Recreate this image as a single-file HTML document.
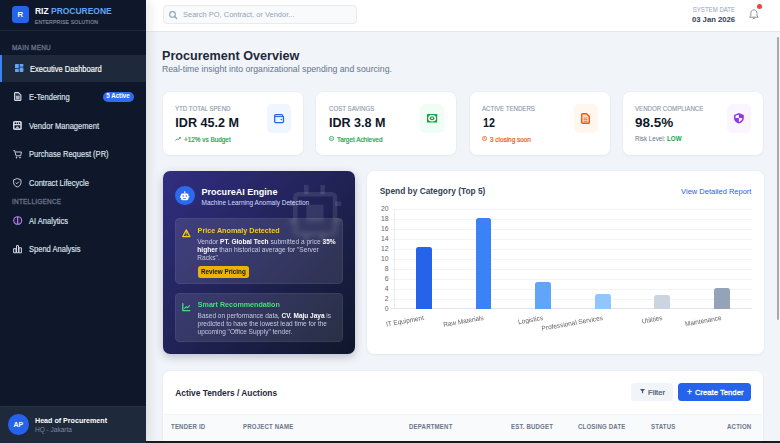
<!DOCTYPE html>
<html><head><meta charset="utf-8">
<style>
*{margin:0;padding:0;box-sizing:border-box}
html,body{width:780px;height:443px;overflow:hidden;background:#f1f5f9;font-family:"Liberation Sans",sans-serif}
.a{position:absolute}
.t{position:absolute;white-space:nowrap;line-height:1}
.b{font-weight:700}
svg{position:absolute;overflow:visible}
#side{z-index:10;left:0;top:0;width:146px;height:443px;background:#0f172a;box-shadow:2px 0 12px rgba(15,23,42,.12)}
#hdr{left:146px;top:0;width:634px;height:31.5px;background:#fff;border-bottom:1px solid #e5e9ef}
.card{position:absolute;background:#fff;border-radius:7px;box-shadow:0 0 0 .5px rgba(226,232,240,.6),0 1px 3px rgba(15,23,42,.05)}
.nav{color:#dfe5ee;font-size:8.4px;-webkit-text-stroke:.15px currentColor;transform:scaleX(.9);transform-origin:0 0}
.sec{color:#64748b;font-size:6.5px;font-weight:400;-webkit-text-stroke:.3px currentColor;letter-spacing:.2px}
.klab{color:#8794a8;font-size:6.8px;-webkit-text-stroke:.1px currentColor;transform:scaleX(.9);transform-origin:0 0}
.kval{color:#0f172a;font-size:12.6px;font-weight:700}
.ksub{font-size:7.1px;font-weight:400;-webkit-text-stroke:.2px currentColor;transform:scaleX(.9);transform-origin:0 0}
.ibox{position:absolute;top:104.3px;width:24.3px;height:28.8px;border-radius:5px}
.ylab{color:#666;font-size:6.8px;text-align:right;width:20px}
.grid{position:absolute;left:390.5px;width:361px;height:1px;background:#f0f3f7}
.bar{position:absolute;width:15.5px;border-radius:2.5px 2.5px 0 0}
.xl{position:absolute;color:#666;font-size:6.8px;white-space:nowrap;line-height:1;transform-origin:100% 0;transform:rotate(-10deg) scaleX(.95)}
.th{color:#6b7688;font-size:6.6px;font-weight:700;letter-spacing:.2px;transform:scaleX(.92);transform-origin:0 0}
</style></head><body>

<!-- SIDEBAR -->
<div id="side" class="a">
  <div class="a" style="left:12px;top:6.2px;width:16.5px;height:16.5px;background:#2563eb;border-radius:3.5px"></div>
  <div class="t b" style="left:12px;top:10.9px;width:16.5px;text-align:center;color:#fff;font-size:7.8px">R</div>
  <div class="t b" style="left:34.6px;top:6.3px;font-size:9.4px;transform:scaleX(.903);transform-origin:0 0;color:#fff">RIZ <span style="color:#60a5fa">PROCUREONE</span></div>
  <div class="t" style="left:34.8px;top:19.9px;font-size:5.2px;letter-spacing:.12px;-webkit-text-stroke:.15px currentColor;color:#8390a3">ENTERPRISE SOLUTION</div>
  <div class="a" style="left:0;top:30px;width:146px;height:1px;background:#1e293b"></div>

  <div class="t sec" style="left:12px;top:44.6px">MAIN MENU</div>
  <div class="a" style="left:0;top:55px;width:146px;height:26.5px;background:#1e293b"></div>
  <div class="a" style="left:0;top:55px;width:2.4px;height:26.5px;background:#3b82f6"></div>
  <svg style="left:14.8px;top:64.2px" width="8.4" height="8" viewBox="0 0 8.4 8"><g fill="#60a5fa"><rect x="0" y="0" width="3.8" height="4.3" rx=".5"/><rect x="4.6" y="0" width="3.8" height="2.8" rx=".5"/><rect x="0" y="5.1" width="3.8" height="2.9" rx=".5"/><rect x="4.6" y="3.6" width="3.8" height="4.4" rx=".5"/></g></svg>
  <div class="t nav" style="left:30.4px;top:64.81px;color:#fff">Executive Dashboard</div>

  <svg style="left:13.5px;top:92px" width="7.5" height="9" viewBox="0 0 7.5 9"><path d="M1.3.6H4.4L6.9 3.1V7.7C6.9 8.1 6.6 8.4 6.2 8.4H1.3C.9 8.4.6 8.1.6 7.7V1.3C.6.9.9.6 1.3.6z" fill="#cbd5e1" fill-opacity=".18" stroke="#d3dae4" stroke-width="1.1" stroke-linejoin="round"/><rect x="1.9" y="4.2" width="3.7" height="3.1" fill="#aab4c3"/><path d="M1.9 4.2H5.6" stroke="#d3dae4" stroke-width=".6"/></svg>
  <div class="t nav" style="left:28.5px;top:93.31px">E-Tendering</div>
  <div class="a" style="left:102.5px;top:91.6px;width:31.7px;height:10.4px;border-radius:6px;background:#2f6df0"></div>
  <div class="t b" style="left:102.3px;top:93.4px;width:32px;text-align:center;color:#fff;font-size:6.9px;transform:scaleX(.9)">5 Active</div>

  <svg style="left:13.1px;top:120.7px" width="8.8" height="8.9" viewBox="0 0 8.8 8.9"><rect x="0" y="0" width="8.8" height="8.9" rx="1.6" fill="#d3dae4"/><ellipse cx="2.3" cy="2.2" rx=".75" ry=".9" fill="#0f172a"/><ellipse cx="4.4" cy="2.2" rx=".75" ry=".9" fill="#0f172a"/><ellipse cx="6.5" cy="2.2" rx=".75" ry=".9" fill="#0f172a"/><path d="M1.5 4.3H7.3V7.3H1.5z" fill="#0f172a"/><path d="M2.8 7.3C2.8 6 3.5 5.3 4.4 5.3S6 6 6 7.3z" fill="#aab4c3"/></svg>
  <div class="t nav" style="left:28.5px;top:121.71px">Vendor Management</div>

  <svg style="left:13px;top:149.7px" width="9" height="8.6" viewBox="0 0 9 8.6"><path d="M.3.6h1.4l1.3 5.2h4.6L8.5 2H2.3" fill="none" stroke="#cbd5e1" stroke-width=".95" stroke-linejoin="round"/><circle cx="3.5" cy="7.6" r=".8" fill="#cbd5e1"/><circle cx="7" cy="7.6" r=".8" fill="#cbd5e1"/></svg>
  <div class="t nav" style="left:28.5px;top:150.31px">Purchase Request (PR)</div>

  <svg style="left:13px;top:177.7px" width="8.6" height="9.4" viewBox="0 0 8.6 9.4"><path d="M4.3.5L8 1.9v2.6c0 2.3-1.6 3.9-3.7 4.5C2.2 8.4.6 6.8.6 4.5V1.9z" fill="none" stroke="#cbd5e1" stroke-width=".95" stroke-linejoin="round"/><path d="M2.7 4.7l1.1 1.1 2.1-2.2" fill="none" stroke="#cbd5e1" stroke-width=".95"/></svg>
  <div class="t nav" style="left:28.5px;top:178.81px">Contract Lifecycle</div>

  <div class="t sec" style="left:12px;top:198.8px">INTELLIGENCE</div>
  <svg style="left:12.7px;top:216.2px" width="9.4" height="9" viewBox="0 0 9.4 9"><path d="M4.7.7C6.8.7 8.7 2.3 8.7 4.5S6.8 8.3 4.7 8.3.7 6.7.7 4.5 2.6.7 4.7.7z" fill="none" stroke="#c084fc" stroke-width="1.1"/><path d="M4.7 1v7" stroke="#d29afc" stroke-width="1"/><path d="M3.2 2.4C2.4 3.3 2.4 5.7 3.2 6.6M6.2 2.4C7 3.3 7 5.7 6.2 6.6" fill="none" stroke="#a855f7" stroke-opacity=".5" stroke-width=".5"/></svg>
  <div class="t nav" style="left:28.5px;top:216.91px">AI Analytics</div>

  <svg style="left:12.9px;top:244.6px" width="9" height="8.4" viewBox="0 0 9 8.4"><g fill="none" stroke="#d3dae4" stroke-width="1" stroke-linejoin="round"><path d="M.6 3.7H3V7.8H.6z"/><path d="M3.5.6H5.5V7.8H3.5z"/><path d="M6 2.8H8.4V7.8H6z"/></g></svg>
  <div class="t nav" style="left:28.5px;top:245.41px">Spend Analysis</div>

  <div class="a" style="left:0;top:405.6px;width:146px;height:37.4px;background:#1e293b;border-top:1px solid #243044"></div>
  <div class="a" style="left:8px;top:414.2px;width:20.5px;height:20.5px;border-radius:50%;background:#2563eb"></div>
  <div class="t b" style="left:8px;top:421.3px;width:20.5px;text-align:center;color:#fff;font-size:7px">AP</div>
  <div class="t b" style="left:34.6px;top:417.3px;color:#fff;font-size:7.6px;transform:scaleX(.938);transform-origin:0 0">Head of Procurement</div>
  <div class="t" style="left:34.6px;top:426.8px;color:#7d8aa0;font-size:6.8px;transform:scaleX(.957);transform-origin:0 0">HQ - Jakarta</div>
</div>

<!-- HEADER -->
<div id="hdr" class="a"></div>
<div class="a" style="left:162.5px;top:5px;width:194.5px;height:19px;background:#f8fafc;border:1px solid #e6ebf1;border-radius:4px"></div>
<svg style="left:169.2px;top:10.7px" width="8.4" height="7.8" viewBox="0 0 8.4 7.8"><circle cx="3.5" cy="3.4" r="2.85" fill="none" stroke="#94a3b8" stroke-width="1.15"/><path d="M5.6 5.5l2.1 2" stroke="#94a3b8" stroke-width="1.2" stroke-linecap="round"/></svg>
<div class="t" style="left:183px;top:11.3px;font-size:7.8px;transform:scaleX(.96);transform-origin:0 0;color:#94a3b8">Search PO, Contract, or Vendor...</div>
<div class="t" style="left:635px;top:6.8px;width:100.1px;text-align:right;font-size:6.5px;transform:scaleX(.932);transform-origin:100% 0;color:#94a3b8">SYSTEM DATE</div>
<div class="t b" style="left:635px;top:15.5px;width:100.1px;text-align:right;font-size:7.7px;color:#334155">03 Jan 2026</div>
<svg style="left:748.8px;top:9.4px" width="9.8" height="10.6" viewBox="0 0 9.8 10.6"><path d="M4.9.9C3 .9 1.8 2.4 1.8 4.3V7L.5 8.2H9.3L8 7V4.3C8 2.4 6.8.9 4.9.9z" fill="none" stroke="#74839a" stroke-width=".85" stroke-linejoin="round"/><path d="M4.2 9.1h1.4L4.9 10z" fill="#74839a" stroke="#74839a" stroke-width=".5" stroke-linejoin="round"/></svg>
<div class="a" style="left:757px;top:4.2px;width:5px;height:5px;border-radius:50%;background:#ef4444"></div>

<!-- TITLE -->
<div class="t b" style="left:162px;top:50.2px;font-size:12.6px;color:#1e293b">Procurement Overview</div>
<div class="t" style="left:162px;top:65.3px;font-size:8.7px;color:#64748b">Real-time insight into organizational spending and sourcing.</div>

<!-- KPI CARDS -->
<div class="card" style="left:163px;top:92.4px;width:140.4px;height:63.1px"></div>
<div class="card" style="left:316px;top:92.4px;width:140.4px;height:63.1px"></div>
<div class="card" style="left:469.8px;top:92.4px;width:140.4px;height:63.1px"></div>
<div class="card" style="left:623px;top:92.4px;width:140.4px;height:63.1px"></div>

<div class="t klab" style="left:175.3px;top:105.6px">YTD TOTAL SPEND</div>
<div class="t kval" style="left:175.3px;top:116.6px">IDR 45.2 M</div>
<svg style="left:175.3px;top:136.8px" width="5.6" height="4" viewBox="0 0 5.6 4"><path d="M.3 3.6l1.8-1.8 1.1 1 2-2.2M3.9.5h1.4v1.3" fill="none" stroke="#16a34a" stroke-width=".8"/></svg>
<div class="t ksub" style="left:183.8px;top:136.5px;color:#16a34a">+12% vs Budget</div>
<div class="ibox" style="left:266.9px;background:#eff6ff"></div>
<svg style="left:273.7px;top:113.9px" width="10.2" height="9.4" viewBox="0 0 10.2 9.4"><path d="M1.9.7H7.6C8.1.7 8.5 1.1 8.5 1.6V2.5H9C9.3 2.5 9.5 2.7 9.5 3V7.6C9.5 8.2 9 8.7 8.4 8.7H1.9C1.2 8.7.7 8.2.7 7.5V1.9C.7 1.2 1.2.7 1.9.7z" fill="none" stroke="#2563eb" stroke-width="1.25" stroke-linejoin="round"/><path d="M.9 2.6H8.5" stroke="#2563eb" stroke-width="1"/><circle cx="7.4" cy="5.6" r=".75" fill="#2563eb"/></svg>

<div class="t klab" style="left:328.9px;top:105.6px">COST SAVINGS</div>
<div class="t kval" style="left:328.9px;top:116.6px">IDR 3.8 M</div>
<svg style="left:328.9px;top:136.4px" width="5" height="5" viewBox="0 0 5 5"><circle cx="2.5" cy="2.5" r="2.1" fill="none" stroke="#16a34a" stroke-width=".75"/><path d="M1.5 2.5l.7.7 1.3-1.4" fill="none" stroke="#16a34a" stroke-width=".7"/></svg>
<div class="t ksub" style="left:336.8px;top:136.5px;color:#16a34a">Target Achieved</div>
<div class="ibox" style="left:419.9px;background:#f0fdf4"></div>
<svg style="left:427px;top:114.2px" width="10.2" height="8.5" viewBox="0 0 10.2 8.5"><rect x="0" y="0" width="10.2" height="8.5" rx=".5" fill="#16a34a"/><ellipse cx="5.1" cy="4.25" rx="3.9" ry="3.3" fill="#fff"/><ellipse cx="5.1" cy="4.25" rx="2.3" ry="2.1" fill="#16a34a"/><circle cx="5.1" cy="4.1" r=".9" fill="#fff"/></svg>

<div class="t klab" style="left:482.2px;top:105.6px">ACTIVE TENDERS</div>
<div class="t kval" style="left:482.6px;top:116.6px;transform:scaleX(.85);transform-origin:0 0">12</div>
<svg style="left:482.2px;top:136.4px" width="5" height="5" viewBox="0 0 5 5"><circle cx="2.5" cy="2.5" r="2.1" fill="none" stroke="#ea580c" stroke-width=".75"/><path d="M2.5 1.3v1.3l.9.6" fill="none" stroke="#ea580c" stroke-width=".7"/></svg>
<div class="t ksub" style="left:489.9px;top:136.5px;color:#ea580c">3 closing soon</div>
<div class="ibox" style="left:573.8px;background:#fff7ed"></div>
<svg style="left:580.9px;top:113px" width="9" height="11" viewBox="0 0 9 11"><path d="M1.6.7H5.5L8.3 3.5V9.4C8.3 9.9 7.9 10.3 7.4 10.3H1.6C1.1 10.3.7 9.9.7 9.4V1.6C.7 1.1 1.1.7 1.6.7z" fill="#fde2cf" stroke="#ea580c" stroke-width="1.4" stroke-linejoin="round"/><path d="M2.6 5h3.8M2.6 6.7h3.8M2.6 8.4h3.8" stroke="#ea580c" stroke-width=".75"/></svg>

<div class="t klab" style="left:635.2px;top:105.6px">VENDOR COMPLIANCE</div>
<div class="t kval" style="left:635.2px;top:116.6px;transform:scaleX(1.07);transform-origin:0 0">98.5%</div>
<div class="t" style="left:635.2px;top:135.9px;font-size:6.9px;transform:scaleX(.9);transform-origin:0 0;color:#64748b">Risk Level: <b style="color:#16a34a">LOW</b></div>
<div class="ibox" style="left:726.9px;background:#faf5ff"></div>
<svg style="left:734.2px;top:113.2px" width="9.8" height="10.4" viewBox="0 0 9.8 10.4"><path d="M4.9 0L9.8 1.9V4.9C9.8 7.7 7.8 9.7 4.9 10.4 2 9.7 0 7.7 0 4.9V1.9z" fill="#9333ea"/><path d="M4.9 1.5L1.5 2.8V5H4.9z" fill="#fff"/><path d="M4.9 5H8.3C8.2 6.9 6.9 8.3 4.9 8.9z" fill="#fff"/></svg>

<!-- AI CARD -->
<div class="a" style="left:162.8px;top:171.3px;width:192.2px;height:182.8px;border-radius:7px;background:linear-gradient(135deg,#312e81 0%,#0f172a 100%);box-shadow:0 3px 8px rgba(30,27,75,.25);overflow:hidden">
  <svg style="left:0;top:0" width="192" height="183" viewBox="0 0 192 183"><g fill="none" stroke="#fff" stroke-opacity=".1" stroke-width="4.6"><rect x="132.3" y="23.3" width="39.7" height="39.7" rx="3"/><path d="M143.2 14v9.3M159.6 14v9.3M143.2 63v7M159.6 63v7M172 32.7h6.3M172 50.3h6.3M126 32.7h6.3M126 50.3h6.3"/></g><rect x="143.4" y="33.7" width="17.1" height="17.1" fill="#fff" fill-opacity=".1"/></svg>
</div>
<div class="a" style="left:175.1px;top:185.6px;width:19.8px;height:19.8px;border-radius:50%;background:#2b69ee"></div>
<svg style="left:179.5px;top:190.8px" width="9.4" height="9.6" viewBox="0 0 9.4 9.6"><circle cx="4.7" cy="1" r=".8" fill="#fff"/><path d="M4.7 1.2v1.4" stroke="#fff" stroke-width=".8"/><rect x="1" y="2.4" width="7.4" height="6.8" rx="1.4" fill="#fff"/><rect x=".2" y="4.6" width=".9" height="2.4" fill="#fff"/><rect x="8.3" y="4.6" width=".9" height="2.4" fill="#fff"/><circle cx="3.1" cy="4.9" r=".75" fill="#2b69ee"/><circle cx="6.3" cy="4.9" r=".75" fill="#2b69ee"/><rect x="3.3" y="7" width="2.8" height=".7" fill="#2b69ee"/></svg>
<div class="t b" style="left:201.5px;top:187.8px;font-size:9.05px;color:#fff">ProcureAI Engine</div>
<div class="t" style="left:201.5px;top:200.2px;font-size:6.5px;color:#d4dcff">Machine Learning Anomaly Detection</div>

<div class="a" style="left:174.9px;top:218.1px;width:167.8px;height:66px;border-radius:4.5px;background:rgba(255,255,255,.1);border:1px solid rgba(255,255,255,.06);backdrop-filter:blur(2px)"></div>
<svg style="left:182.1px;top:229px" width="8.6" height="8.4" viewBox="0 0 8.6 8.4"><path d="M4.3.9L7.9 7.6H.7z" fill="none" stroke="#facc15" stroke-width="1.2" stroke-linejoin="round"/><path d="M4.3 3.2v2.2" stroke="#facc15" stroke-width=".9"/><circle cx="4.3" cy="6.4" r=".5" fill="#facc15"/></svg>
<div class="t b" style="left:197.6px;top:227.4px;font-size:7.2px;color:#facc15">Price Anomaly Detected</div>
<div class="a" style="left:197.3px;top:238px;font-size:6.6px;line-height:8px;color:#c7cbe0;white-space:nowrap">Vendor <b style="color:#fff">PT. Global Tech</b> submitted a price <b style="color:#fff">35%</b><br><b style="color:#fff">higher</b> than historical average for "Server<br>Racks".</div>
<div class="a" style="left:197.5px;top:266px;width:51.8px;height:12px;border-radius:2.5px;background:#eab308"></div>
<div class="t b" style="left:197.5px;top:269.1px;width:51.8px;text-align:center;font-size:6.3px;color:#111827">Review Pricing</div>

<div class="a" style="left:174.9px;top:292.6px;width:167.8px;height:49.6px;border-radius:4.5px;background:rgba(255,255,255,.1);border:1px solid rgba(255,255,255,.06)"></div>
<svg style="left:182px;top:303.3px" width="8.6" height="8.4" viewBox="0 0 8.6 8.4"><path d="M.8.6v7h7" fill="none" stroke="#4ade80" stroke-width="1.3" stroke-linecap="round" stroke-linejoin="round"/><path d="M2.6 5.4l1.6-1.6 1.3 1 2-2.1" fill="none" stroke="#4ade80" stroke-width="1.1" stroke-linecap="round" stroke-linejoin="round"/></svg>
<div class="t b" style="left:197.8px;top:301.7px;font-size:7.13px;color:#4ade80">Smart Recommendation</div>
<div class="a" style="left:197.6px;top:311.8px;font-size:6.5px;line-height:8px;color:#c7cbe0;white-space:nowrap">Based on performance data, <b style="color:#fff">CV. Maju Jaya</b> is<br>predicted to have the lowest lead time for the<br>upcoming "Office Supply" tender.</div>

<!-- CHART CARD -->
<div class="card" style="left:367px;top:171.4px;width:396.6px;height:182.2px"></div>
<div class="t b" style="left:379.8px;top:186.7px;font-size:8.35px;color:#334155">Spend by Category (Top 5)</div>
<div class="t" style="left:651px;top:187.9px;width:100.4px;text-align:right;font-size:7.9px;transform:scaleX(.95);transform-origin:100% 0;color:#2563eb">View Detailed Report</div>

<div class="grid" style="top:209.2px"></div>
<div class="grid" style="top:219.1px"></div>
<div class="grid" style="top:229px"></div>
<div class="grid" style="top:239px"></div>
<div class="grid" style="top:248.9px"></div>
<div class="grid" style="top:258.8px"></div>
<div class="grid" style="top:268.7px"></div>
<div class="grid" style="top:278.6px"></div>
<div class="grid" style="top:288.6px"></div>
<div class="grid" style="top:298.5px"></div>
<div class="a" style="left:390.5px;top:308.4px;width:361px;height:1px;background:#e2e6ec"></div>
<div class="a" style="left:394.2px;top:209.2px;width:1px;height:100px;background:#e8ebf0"></div>

<div class="t ylab" style="left:368.6px;top:206.4px">20</div>
<div class="t ylab" style="left:368.6px;top:216.3px">18</div>
<div class="t ylab" style="left:368.6px;top:226.2px">16</div>
<div class="t ylab" style="left:368.6px;top:236.2px">14</div>
<div class="t ylab" style="left:368.6px;top:246.1px">12</div>
<div class="t ylab" style="left:368.6px;top:256.0px">10</div>
<div class="t ylab" style="left:368.6px;top:265.9px">8</div>
<div class="t ylab" style="left:368.6px;top:275.8px">6</div>
<div class="t ylab" style="left:368.6px;top:285.8px">4</div>
<div class="t ylab" style="left:368.6px;top:295.7px">2</div>
<div class="t ylab" style="left:368.6px;top:305.6px">0</div>

<div class="bar" style="left:416.2px;top:246.8px;height:62px;background:#2563eb"></div>
<div class="bar" style="left:475.8px;top:218.4px;height:90.4px;background:#3b82f6"></div>
<div class="bar" style="left:535.4px;top:281.8px;height:27px;background:#60a5fa"></div>
<div class="bar" style="left:595px;top:293.6px;height:15.2px;background:#93c5fd"></div>
<div class="bar" style="left:654.4px;top:295.1px;height:13.7px;background:#cbd5e1"></div>
<div class="bar" style="left:714px;top:287.8px;height:21px;background:#94a3b8"></div>

<div class="xl" style="right:356.6px;top:315.0px">IT Equipment</div>
<div class="xl" style="right:297.1px;top:315.4px">Raw Materials</div>
<div class="xl" style="right:237.6px;top:315.4px">Logistics</div>
<div class="xl" style="right:178.0px;top:315.4px">Professional Services</div>
<div class="xl" style="right:118.6px;top:315.4px">Utilities</div>
<div class="xl" style="right:59.0px;top:315.4px">Maintenance</div>

<!-- TABLE CARD -->
<div class="card" style="left:162.6px;top:370.7px;width:600.6px;height:90px"></div>
<div class="t b" style="left:175.2px;top:388.9px;font-size:8.4px;color:#1e293b">Active Tenders / Auctions</div>
<div class="a" style="left:631.3px;top:383.3px;width:42px;height:18.1px;border-radius:3.5px;background:#f1f5f9"></div>
<svg style="left:640.2px;top:389.3px" width="5" height="4.6" viewBox="0 0 5 4.6"><path d="M0 0h5L3.1 2.2v2.4L1.9 3.8V2.2z" fill="#475569"/></svg>
<div class="t" style="left:648.1px;top:389.1px;font-size:7.6px;-webkit-text-stroke:.2px currentColor;color:#475569">Filter</div>
<div class="a" style="left:677.8px;top:383.3px;width:73.1px;height:18.1px;border-radius:3.5px;background:#2563eb"></div>
<div class="t" style="left:686.9px;top:387.7px;font-size:8.6px;-webkit-text-stroke:.25px currentColor;color:#fff">+</div>
<div class="t" style="left:694.9px;top:388.8px;font-size:7.7px;-webkit-text-stroke:.3px currentColor;color:#fff">Create Tender</div>

<div class="a" style="left:164px;top:413.8px;width:598px;height:30px;background:#f8fafc;border-top:1px solid #f1f5f9"></div>
<div class="t th" style="left:171.3px;top:423.7px">TENDER ID</div>
<div class="t th" style="left:242.9px;top:423.7px">PROJECT NAME</div>
<div class="t th" style="left:409px;top:423.7px">DEPARTMENT</div>
<div class="t th" style="left:510.9px;top:423.7px">EST. BUDGET</div>
<div class="t th" style="left:578.1px;top:423.7px">CLOSING DATE</div>
<div class="t th" style="left:650.8px;top:423.7px">STATUS</div>
<div class="t th" style="left:651px;top:423.7px;width:100.4px;text-align:right;transform-origin:100% 0">ACTION</div>

<!-- scrollbar + bottom line -->
<div class="a" style="left:776.6px;top:36.6px;width:2.5px;height:283px;border-radius:2px;background:#a9a9a9"></div>
<div class="a" style="left:0;top:441.4px;width:780px;height:1.6px;background:#1b1b1b"></div>
</body></html>
